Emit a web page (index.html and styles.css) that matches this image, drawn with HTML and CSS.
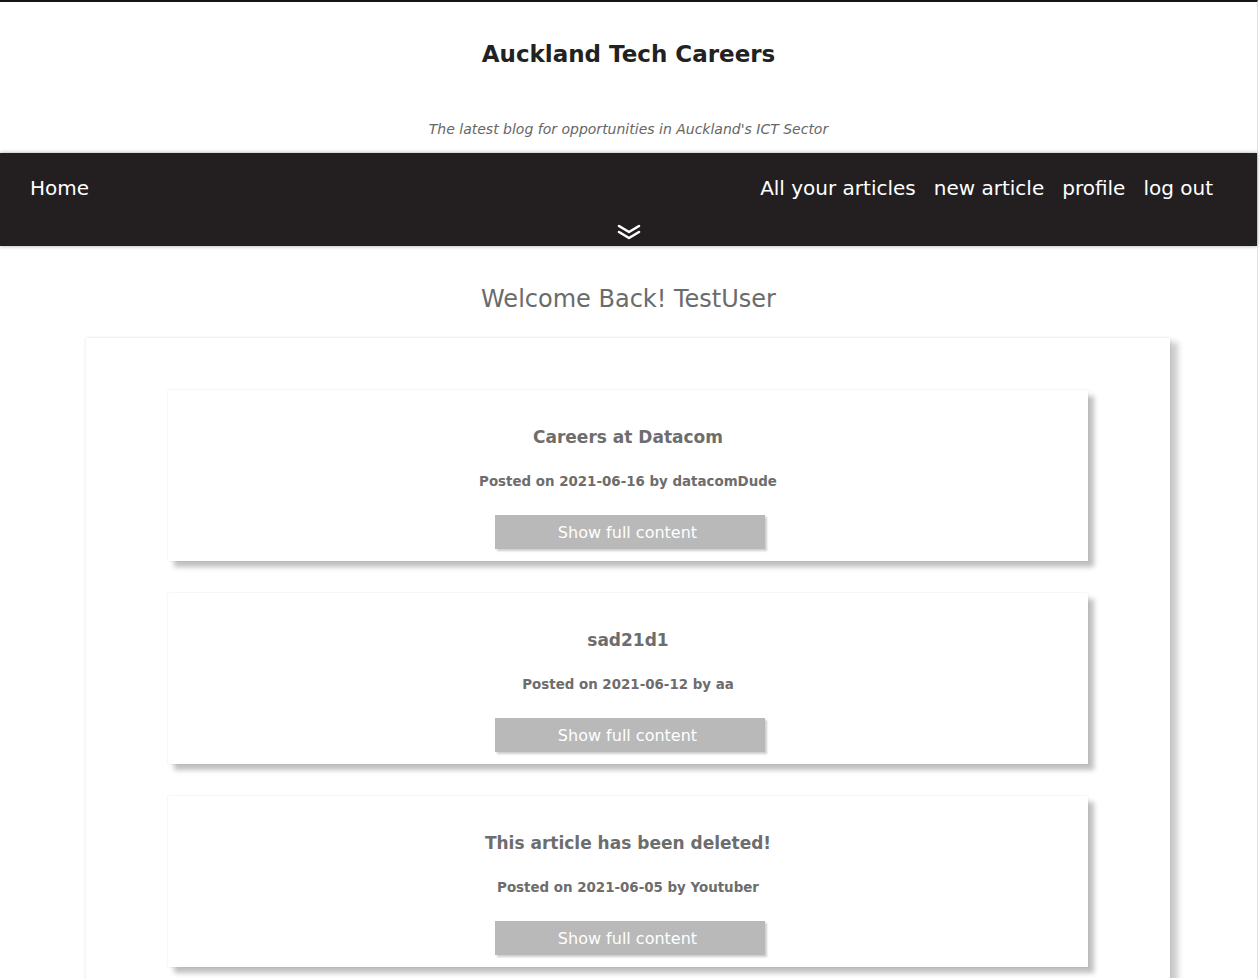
FILE: index.html
```html
<!DOCTYPE html>
<html lang="en">
<head>
<meta charset="utf-8">
<title>Auckland Tech Careers</title>
<link rel="stylesheet" href="styles.css">
</head>
<body>
<div class="page">
  <header class="masthead">
    <h1 class="site-title">Auckland Tech Careers</h1>
    <p class="tagline">The latest blog for opportunities in Auckland's ICT Sector</p>
  </header>
  <nav class="navbar">
    <div class="nav-row">
      <a class="nav-link" href="#">Home</a>
      <div class="nav-right">
        <a class="nav-link" href="#">All your articles</a>
        <a class="nav-link" href="#">new article</a>
        <a class="nav-link" href="#">profile</a>
        <a class="nav-link" href="#">log out</a>
      </div>
    </div>
    <div class="nav-toggle">
      <svg width="24" height="16" viewBox="0 0 24 16" fill="none" stroke="#fff" stroke-width="2.6" stroke-linecap="round" stroke-linejoin="round"><path d="M2 2 L12 8 L22 2"/><path d="M2 8 L12 14 L22 8"/></svg>
    </div>
  </nav>
  <main class="content">
    <h2 class="welcome">Welcome Back! TestUser</h2>
    <section class="article-panel">
      <article class="card">
        <h3 class="card-title">Careers at Datacom</h3>
        <p class="card-meta">Posted on 2021-06-16 by datacomDude</p>
        <button class="card-btn">Show full content</button>
      </article>
      <article class="card">
        <h3 class="card-title">sad21d1</h3>
        <p class="card-meta">Posted on 2021-06-12 by aa</p>
        <button class="card-btn">Show full content</button>
      </article>
      <article class="card">
        <h3 class="card-title">This article has been deleted!</h3>
        <p class="card-meta">Posted on 2021-06-05 by Youtuber</p>
        <button class="card-btn">Show full content</button>
      </article>
    </section>
  </main>
</div>
</body>
</html>
```
FILE: styles.css
```css
html, body {
  margin: 0;
  padding: 0;
  background: #fff;
}
body {
  font-family: "DejaVu Sans", Verdana, sans-serif;
  overflow: hidden;
}
.page {
  width: 1257px;
  border-top: 2px solid #161616;
  border-right: 1px solid #e2e2e2;
  min-height: 976px;
}
.masthead {
  text-align: center;
  padding-top: 38px;
  height: 113px;
  box-sizing: border-box;
}
.site-title {
  margin: 0;
  font-size: 23px;
  font-weight: bold;
  color: #222;
  line-height: 28px;
}
.tagline {
  margin: 52px 0 0;
  font-size: 14px;
  font-style: italic;
  color: #666;
  line-height: 18px;
}
.navbar {
  margin-top: 38px;
  background: #231f20;
  height: 93px;
  box-shadow: 0 0 4px rgba(0,0,0,0.35);
  display: flex;
  flex-direction: column;
}
.nav-row {
  display: flex;
  justify-content: space-between;
  align-items: center;
  padding: 22px 44px 0 30px;
  height: 26px;
}
.nav-right {
  display: flex;
  gap: 18px;
}
.nav-link {
  color: #fff;
  text-decoration: none;
  font-size: 20px;
  line-height: 26px;
}
.nav-toggle {
  display: flex;
  justify-content: center;
  margin-top: 23px;
}
.content {
  text-align: center;
}
.welcome {
  margin: 0;
  padding-top: 39px;
  font-size: 24px;
  font-weight: normal;
  color: #6b6b6b;
  line-height: 28px;
}
.article-panel {
  margin: 25px 0 0 86px;
  width: 1084px;
  box-sizing: border-box;
  padding: 52px 82px 40px;
  background: #fff;
  box-shadow: 8px 4px 6px rgba(0,0,0,0.2), 0 0 3px rgba(0,0,0,0.12);
  display: flex;
  flex-direction: column;
  gap: 32px;
}
.card {
  height: 171px;
  box-sizing: border-box;
  background: #fff;
  padding-top: 36px;
  box-shadow: 6px 6px 5px rgba(0,0,0,0.25), 0 0 2px rgba(0,0,0,0.1);
  display: flex;
  flex-direction: column;
  align-items: center;
}
.card-title {
  margin: 0;
  font-size: 17px;
  font-weight: bold;
  color: #6d6d6d;
  line-height: 22px;
}
.card-meta {
  margin: 26px 0 0;
  font-size: 13.4px;
  font-weight: bold;
  color: #6d6d6d;
  line-height: 16px;
}
.card-btn {
  margin: 25px 0 0 4px;
  width: 270px;
  height: 34px;
  border: none;
  background: #b9b9b9;
  color: #fff;
  font-family: "DejaVu Sans", Verdana, sans-serif;
  font-size: 16px;
  box-shadow: 2px 2px 2px rgba(0,0,0,0.2);
  padding: 0 5px 0 0;
}
```
